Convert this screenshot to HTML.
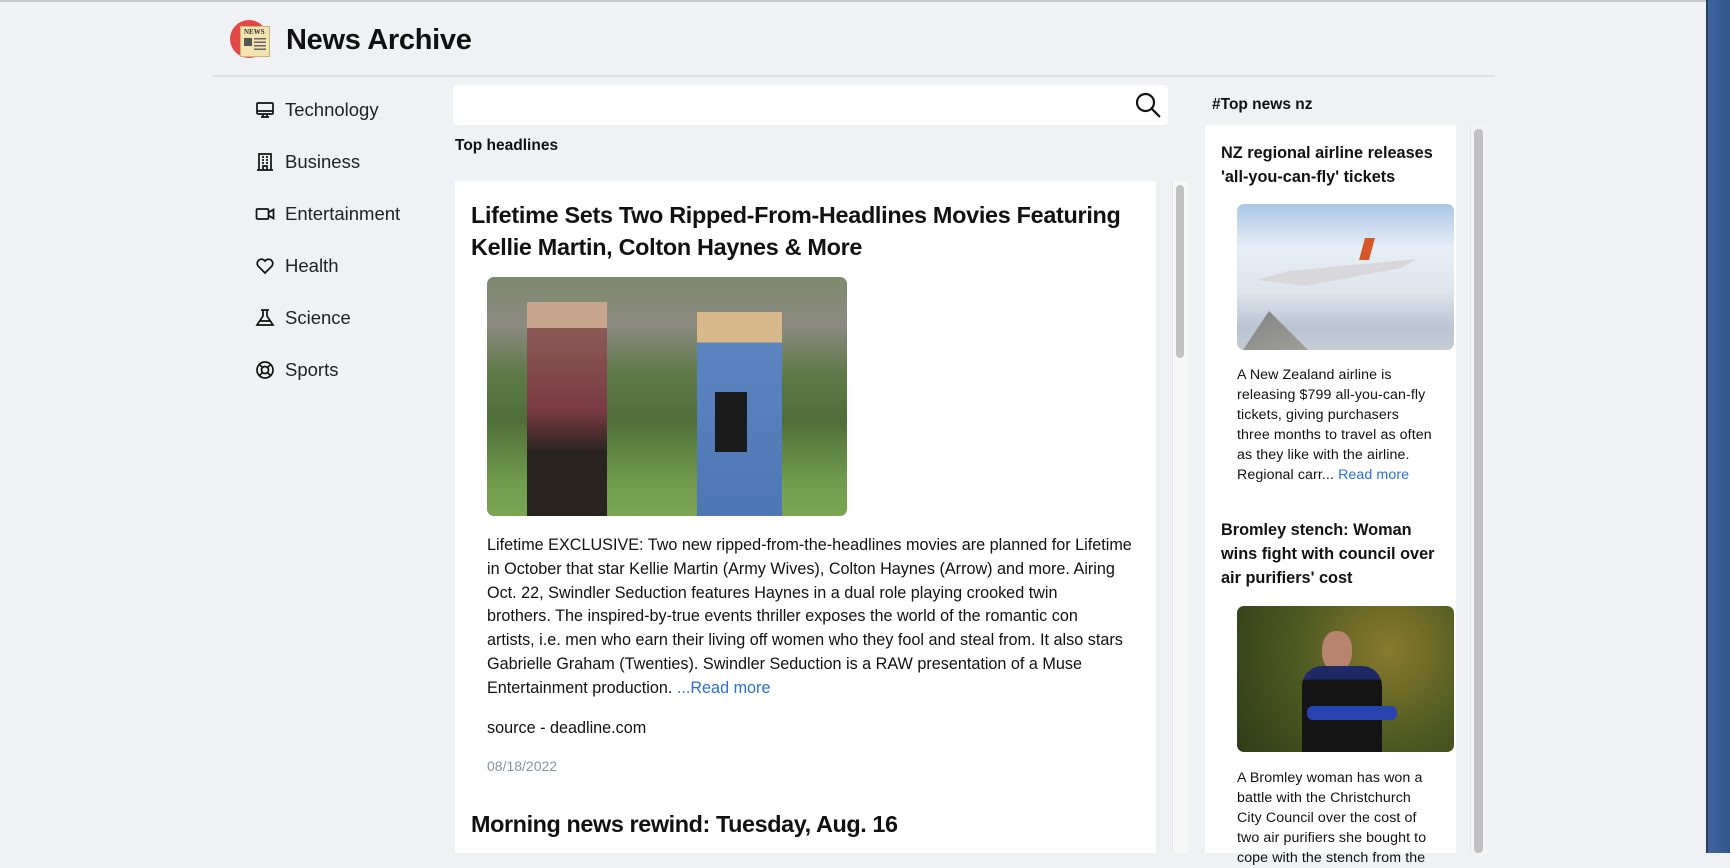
<!DOCTYPE html>
<html><head><meta charset="utf-8"><style>
*{margin:0;padding:0;box-sizing:border-box}
body{width:1730px;height:853px;overflow:hidden;background:#f0f1f5;font-family:"Liberation Sans",sans-serif;color:#111;position:relative}
.a{position:absolute}
.nav{position:absolute;left:255px;font-size:18.5px;color:#222;display:flex;align-items:center}
.nav svg{width:20px;height:20px;margin-right:10px;fill:none;stroke:#111;stroke-width:1.7}
.p{font-size:16.2px;line-height:23.8px;color:#111}
.rp{font-size:14.2px;line-height:20px;color:#111;letter-spacing:0.1px}
.lnk{color:#2a6fe0}
</style></head><body>
<div class="a" style="left:0;top:0;width:1708px;height:2px;background:#c8c8cc"></div>
<div class="a" style="left:1706px;top:0;width:2px;height:853px;background:#2b3d5a"></div>
<div class="a" style="left:1708px;top:0;width:22px;height:853px;background:linear-gradient(90deg,#3e64a0,#34558a)"></div>

<!-- logo -->
<div class="a" style="left:230px;top:20px;width:38px;height:38px;border-radius:50%;background:#e24846"></div>
<div class="a" style="left:240px;top:26px;width:30px;height:31px;background:#f2e3b0;border:1px solid #cbb67a"></div>
<div class="a" style="left:244px;top:28px;font-size:7px;font-weight:bold;font-family:'Liberation Serif',serif;color:#333">NEWS</div>
<div class="a" style="left:244px;top:38px;width:8px;height:8px;background:#555"></div>
<div class="a" style="left:254px;top:38px;width:12px;height:13px;background:repeating-linear-gradient(#666 0 1.5px,transparent 1.5px 3.5px)"></div>
<div class="a" style="left:286px;top:24px;font-size:29px;font-weight:bold;color:#111;letter-spacing:-0.3px">News Archive</div>
<div class="a" style="left:213px;top:75px;width:1282px;height:2px;background:#dfe0e4"></div>

<!-- nav -->
<div class="nav" style="top:99px"><svg viewBox="0 0 20 20"><rect x="2" y="3" width="16" height="11" rx="1"/><path d="M2 11h16M8 14v3M12 14v3M6 17h8"/></svg>Technology</div>
<div class="nav" style="top:151px"><svg viewBox="0 0 20 20"><path d="M4 18V2h12v16M2 18h16M7 5h2M11 5h2M7 8h2M11 8h2M7 11h2M11 11h2M8 18v-4h4v4"/></svg>Business</div>
<div class="nav" style="top:203px"><svg viewBox="0 0 20 20"><rect x="1.5" y="5" width="12" height="10" rx="1"/><path d="M13.5 8.5l5-3v9l-5-3"/></svg>Entertainment</div>
<div class="nav" style="top:255px"><svg viewBox="0 0 20 20"><path d="M10 17L3 10a4 4 0 0 1 7-5a4 4 0 0 1 7 5z"/></svg>Health</div>
<div class="nav" style="top:307px"><svg viewBox="0 0 20 20"><path d="M6 2h8M8 2v6L2 17h16L12 8V2M4.5 13h11"/></svg>Science</div>
<div class="nav" style="top:359px"><svg viewBox="0 0 20 20"><circle cx="10" cy="10" r="8"/><circle cx="10" cy="10" r="3.5"/><path d="M4.3 4.3l3.2 3.2M15.7 4.3l-3.2 3.2M4.3 15.7l3.2-3.2M15.7 15.7l-3.2-3.2"/></svg>Sports</div>

<!-- search -->
<div class="a" style="left:453px;top:85px;width:715px;height:40px;background:#fff;border-radius:4px"></div>
<svg class="a" style="left:1134px;top:91px" width="28" height="28" viewBox="0 0 28 28" fill="none" stroke="#111" stroke-width="2.2"><circle cx="11.5" cy="11.5" r="8.5"/><path d="M17.8 17.8l7.5 7.5" stroke-linecap="round"/></svg>
<div class="a" style="left:455px;top:137px;font-size:15.5px;font-weight:bold">Top headlines</div>

<!-- main card -->
<div class="a" style="left:455px;top:181px;width:701px;height:672px;background:#fff"></div>
<div class="a" style="left:1172px;top:181px;width:16px;height:672px;background:#f7f7f7;border-left:1px solid #e6e6e6"></div>
<div class="a" style="left:1176px;top:185px;width:8px;height:173px;background:#c1c1c1;border-radius:4px"></div>
<div class="a" style="left:471px;top:199px;width:680px;font-size:23.4px;line-height:32px;font-weight:bold;letter-spacing:-0.3px">Lifetime Sets Two Ripped-From-Headlines Movies Featuring Kellie Martin, Colton Haynes &amp; More</div>
<div class="a" style="left:487px;top:277px;width:360px;height:239px;border-radius:7px;overflow:hidden;background:linear-gradient(180deg,#7d8a6c 0%,#8c8a80 20%,#5f7a4a 40%,#4f6e3a 60%,#6f9b4c 85%,#7aa552 100%)">
 <div class="a" style="left:40px;top:25px;width:80px;height:215px;background:linear-gradient(180deg,#c7a48d 0 12%,#8b5a55 12%,#7a3b42 50%,#2a2420 70%)"></div>
 <div class="a" style="left:210px;top:35px;width:85px;height:205px;background:linear-gradient(180deg,#d7b88b 0 15%,#5c84c0 15%,#4d77b4 100%)"></div>
 <div class="a" style="left:228px;top:115px;width:32px;height:60px;background:#1b1b1b"></div>
</div>
<div class="a p" style="left:487px;top:534px;width:680px;white-space:nowrap">Lifetime EXCLUSIVE: Two new ripped-from-the-headlines movies are planned for Lifetime<br>in October that star Kellie Martin (Army Wives), Colton Haynes (Arrow) and more. Airing<br>Oct. 22, Swindler Seduction features Haynes in a dual role playing crooked twin<br>brothers. The inspired-by-true events thriller exposes the world of the romantic con<br>artists, i.e. men who earn their living off women who they fool and steal from. It also stars<br>Gabrielle Graham (Twenties). Swindler Seduction is a RAW presentation of a Muse<br>Entertainment production. <span class="lnk">...Read more</span></div>
<div class="a p" style="left:487px;top:717px">source - deadline.com</div>
<div class="a" style="left:487px;top:758px;font-size:14px;color:#8a93a3">08/18/2022</div>
<div class="a" style="left:471px;top:811px;font-size:23.4px;font-weight:bold;letter-spacing:-0.4px">Morning news rewind: Tuesday, Aug. 16</div>

<!-- right -->
<div class="a" style="left:1212px;top:96px;font-size:15.5px;font-weight:bold">#Top news nz</div>
<div class="a" style="left:1205px;top:125px;width:251px;height:728px;background:#fff"></div>
<div class="a" style="left:1470px;top:125px;width:18px;height:728px;background:#f4f4f6;border-left:1px solid #e3e3e3"></div>
<div class="a" style="left:1474px;top:129px;width:9px;height:724px;background:#c1c1c1;border-radius:4px"></div>
<div class="a" style="left:1221px;top:141px;width:222px;font-size:16.3px;line-height:24px;font-weight:bold">NZ regional airline releases 'all-you-can-fly' tickets</div>
<div class="a" style="left:1237px;top:204px;width:217px;height:146px;border-radius:7px;overflow:hidden;background:linear-gradient(180deg,#a9c6e6 0%,#e6eef6 30%,#dfe5ec 60%,#b9c4d2 85%,#c5ccd4 100%)">
 <div class="a" style="left:0;top:95px;width:80px;height:60px;background:linear-gradient(160deg,#7a7c80,#a5a49c);clip-path:polygon(0 100%,40% 20%,100% 100%)"></div>
 <div class="a" style="left:20px;top:55px;width:160px;height:30px;background:#d8d8dc;clip-path:polygon(0 70%,20% 40%,100% 0,90% 30%,30% 90%)"></div>
 <div class="a" style="left:125px;top:34px;width:10px;height:22px;background:#d6572a;transform:skewX(-15deg)"></div>
</div>
<div class="a rp" style="left:1237px;top:365px;width:196px">A New Zealand airline is releasing $799 all-you-can-fly tickets, giving purchasers three months to travel as often as they like with the airline. Regional carr... <span class="lnk">Read more</span></div>
<div class="a" style="left:1221px;top:518px;width:220px;font-size:16.3px;line-height:24px;font-weight:bold">Bromley stench: Woman wins fight with council over air purifiers' cost</div>
<div class="a" style="left:1237px;top:606px;width:217px;height:146px;border-radius:7px;overflow:hidden;background:radial-gradient(circle at 70% 30%,#8a7a2c,#4d5a22 50%,#2f3b18 100%)">
 <div class="a" style="left:85px;top:25px;width:30px;height:40px;border-radius:45%;background:#b88470"></div>
 <div class="a" style="left:65px;top:60px;width:80px;height:90px;border-radius:20px 20px 0 0;background:linear-gradient(180deg,#1e2a66 0 15%,#141414 15%)"></div>
 <div class="a" style="left:70px;top:100px;width:90px;height:14px;background:#2844b0;border-radius:6px"></div>
</div>
<div class="a rp" style="left:1237px;top:768px;width:200px">A Bromley woman has won a battle with the Christchurch City Council over the cost of two air purifiers she bought to cope with the stench from the</div>
</body></html>
